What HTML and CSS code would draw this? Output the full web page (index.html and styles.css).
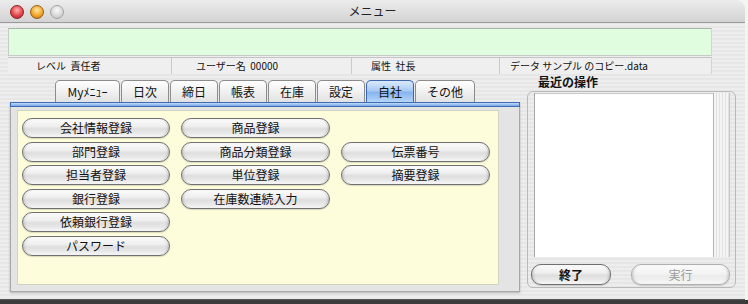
FILE: index.html
```html
<!DOCTYPE html>
<html lang="ja">
<head>
  <meta charset="UTF-8">
  <title>メニュー</title>
  <link rel="stylesheet" href="styles.css">
</head>
<body>
  <div class="window">
    <div class="titlebar">
      <div class="lights">
        <span class="light red"></span>
        <span class="light amber"></span>
        <span class="light off"></span>
      </div>
      <div class="title">メニュー</div>
    </div>

    <div class="message"></div>

    <div class="status">
      <div class="cell">レベル&nbsp;&nbsp;責任者</div>
      <div class="cell">ユーザー名&nbsp;&nbsp;00000</div>
      <div class="cell">属性&nbsp;&nbsp;社長</div>
      <div class="cell">データ&nbsp;サンプル&nbsp;のコピー.data</div>
    </div>

    <div class="main">
      <div class="left">
        <div class="tabs">
          <div class="tab tab-wide">Myﾒﾆｭｰ</div>
          <div class="tab">日次</div>
          <div class="tab">締日</div>
          <div class="tab">帳表</div>
          <div class="tab">在庫</div>
          <div class="tab">設定</div>
          <div class="tab active">自社</div>
          <div class="tab tab-other">その他</div>
        </div>
        <div class="panel">
          <div class="panel-top"></div>
          <div class="panel-body">
            <div class="sheet">
              <button class="pill">会社情報登録</button>
              <button class="pill">商品登録</button>
              <span class="blank"></span>

              <button class="pill">部門登録</button>
              <button class="pill">商品分類登録</button>
              <button class="pill">伝票番号</button>

              <button class="pill">担当者登録</button>
              <button class="pill">単位登録</button>
              <button class="pill">摘要登録</button>

              <button class="pill">銀行登録</button>
              <button class="pill">在庫数連続入力</button>
              <span class="blank"></span>

              <button class="pill">依頼銀行登録</button>
              <span class="blank"></span>
              <span class="blank"></span>

              <button class="pill">パスワード</button>
            </div>
          </div>
        </div>
      </div>

      <div class="right">
        <div class="recent-label">最近の操作</div>
        <div class="group">
          <div class="list">
            <div class="list-body"></div>
            <div class="scroll-track"></div>
          </div>
          <div class="actions">
            <button class="pill pill-quit">終了</button>
            <button class="pill pill-run" disabled>実行</button>
          </div>
        </div>
      </div>
    </div>
  </div>
</body>
</html>
```

FILE: styles.css
```css
body {
  margin: 0;
  width: 748px;
  height: 304px;
  overflow: hidden;
  background: linear-gradient(to bottom, #f4f4f4 0, #f4f4f4 300px, #3c3c3c 300px);
  font-family: "Noto Sans CJK JP", "Noto Sans", sans-serif;
  color: #111;
}

.window {
  width: 745px;
  height: 300px;
  box-sizing: border-box;
  border-radius: 0 9px 0 0;
  border-bottom: 1px solid #5a5a5a;
  background: repeating-linear-gradient(to bottom, #ededed 0, #ededed 2px, #e6e6e6 2px, #e6e6e6 4px);
  display: flex;
  flex-direction: column;
  overflow: hidden;
}

/* title bar */
.titlebar {
  position: relative;
  height: 23px;
  flex: none;
  box-sizing: border-box;
  border-bottom: 1px solid #9a9a9a;
  background: linear-gradient(to bottom, #ececec, #d3d3d3);
  border-radius: 0 9px 0 0;
}

.lights {
  display: flex;
  gap: 6px;
  padding: 5px 0 0 10px;
}

.light {
  width: 14px;
  height: 14px;
  border-radius: 50%;
  box-sizing: border-box;
}

.red {
  background: radial-gradient(circle at 50% 35%, #ffb0b0 0, #e2474b 55%, #a8161c 100%);
  border: 1px solid #8e2226;
}

.amber {
  background: radial-gradient(circle at 50% 35%, #ffe8a8 0, #f3a72a 55%, #b4660a 100%);
  border: 1px solid #9a5d14;
}

.off {
  background: radial-gradient(circle at 50% 35%, #fafafa 0, #d6d6d6 60%, #bdbdbd 100%);
  border: 1px solid #a4a4a4;
}

.title {
  position: absolute;
  top: 0;
  left: 0;
  right: 0;
  text-align: center;
  font-size: 12px;
  line-height: 22px;
  color: #222;
}

/* message + status */
.message {
  flex: none;
  height: 28px;
  width: 704px;
  margin: 5px 0 0 8px;
  box-sizing: border-box;
  background: #e0fde0;
  border-top: 1px solid #a8b4a8;
  border-left: 1px solid #c4ccc4;
  border-bottom: 1px solid #c8c8c8;
  border-right: 1px solid #d4d4d4;
}

.status {
  flex: none;
  display: grid;
  grid-template-columns: 164px 180px 148px 212px;
  margin: 1px 0 0 8px;
  height: 17px;
}

.cell {
  box-sizing: border-box;
  background: #efefef;
  border-top: 1px solid #c4c4c4;
  border-right: 1px solid #c9c9c9;
  font-size: 10px;
  line-height: 16px;
  white-space: nowrap;
}

.cell:nth-child(1) { padding-left: 28px; }
.cell:nth-child(2) { padding-left: 24px; }
.cell:nth-child(3) { padding-left: 19px; }
.cell:nth-child(4) { padding-left: 10px; border-right: 1px solid #d4d4d4; }

/* main area */
.main {
  flex: 1;
  display: flex;
}

.left {
  width: 510px;
  margin-left: 10px;
}

.tabs {
  display: flex;
  gap: 1px;
  margin: 6px 0 0 45px;
  height: 22px;
}

.tab {
  width: 48px;
  height: 22px;
  box-sizing: border-box;
  border: 1px solid #8c8c8c;
  border-bottom: none;
  border-radius: 5px 5px 0 0;
  background: linear-gradient(to bottom, #fefefe 0, #f1f1f1 50%, #e2e2e2 100%);
  font-size: 12px;
  line-height: 21px;
  text-align: center;
  color: #111;
}

.tab-wide { width: 65px; }
.tab-other { width: 60px; }

.tab.active {
  border-color: #3a67b0;
  background: linear-gradient(to bottom, #dbe9fc 0, #a9cbf4 45%, #86b5ee 55%, #b6d5f8 100%);
}

.panel {
  height: 190px;
  display: flex;
  flex-direction: column;
  box-shadow: 0 1px 2px rgba(0, 0, 0, 0.25);
}

.panel-top {
  height: 5px;
  flex: none;
  box-sizing: border-box;
  border: 1px solid #3f6db5;
  background: linear-gradient(to bottom, #c2daf8, #7aa7e6);
}

.panel-body {
  flex: 1;
  box-sizing: border-box;
  border: 1px solid #a8a8a8;
  border-top: none;
  background: #e4e4e4;
  padding: 3px 20px 6px 6px;
  display: flex;
}

.sheet {
  flex: 1;
  box-sizing: border-box;
  background: #fdfddb;
  border: 1px solid #d2d2c0;
  padding: 7px 0 0 4px;
  display: grid;
  grid-template-columns: 148px 149px 149px;
  grid-auto-rows: 20px;
  column-gap: 11px;
  row-gap: 3.6px;
  align-content: start;
}

/* aqua pill buttons */
.pill {
  height: 20px;
  padding: 0;
  box-sizing: border-box;
  border: 1px solid #707070;
  border-radius: 10px;
  background: linear-gradient(to bottom, #fbfbfb 0, #efefef 40%, #dedede 55%, #e9e9e9 80%, #f7f7f7 100%);
  box-shadow: inset 3px 0 3px -2px rgba(0, 0, 0, 0.18), inset -3px 0 3px -2px rgba(0, 0, 0, 0.18), 0 1px 1px rgba(0, 0, 0, 0.15);
  font-family: inherit;
  font-size: 12px;
  line-height: 18px;
  color: #111;
  text-align: center;
}

/* right column */
.right {
  width: 209px;
  margin-left: 7px;
  display: flex;
  flex-direction: column;
}

.recent-label {
  margin: 1px 0 0 11px;
  height: 16px;
  font-size: 12px;
  font-weight: bold;
  line-height: 14px;
}

.group {
  height: 197px;
  box-sizing: border-box;
  border: 1px solid #b9b9b9;
  border-radius: 6px;
  padding: 1px 5px 0 3px;
  display: flex;
  flex-direction: column;
}

.list {
  margin-left: 3px;
  height: 164px;
  display: flex;
  border-left: 1px solid #a6a6a6;
  border-right: 1px solid #c6c6c6;
}

.list-body {
  flex: 1;
  background: #fff;
  border-top: 1px solid #c8c8c8;
}

.scroll-track {
  width: 15px;
  border-left: 1px solid #b4b4b4;
  background: repeating-linear-gradient(to right, #f4f4f4 0, #f4f4f4 2px, #e2e2e2 2px, #e2e2e2 3px);
}

.actions {
  display: flex;
  justify-content: space-between;
  margin-top: 7px;
}

.pill-quit {
  width: 80px;
  height: 21px;
  font-weight: bold;
}

.pill-run {
  width: 99px;
  height: 21px;
  color: #9a9a9a;
  border-color: #b0b0b0;
  background: linear-gradient(to bottom, #fbfbfb 0, #f2f2f2 50%, #ebebeb 55%, #f6f6f6 100%);
}
```
